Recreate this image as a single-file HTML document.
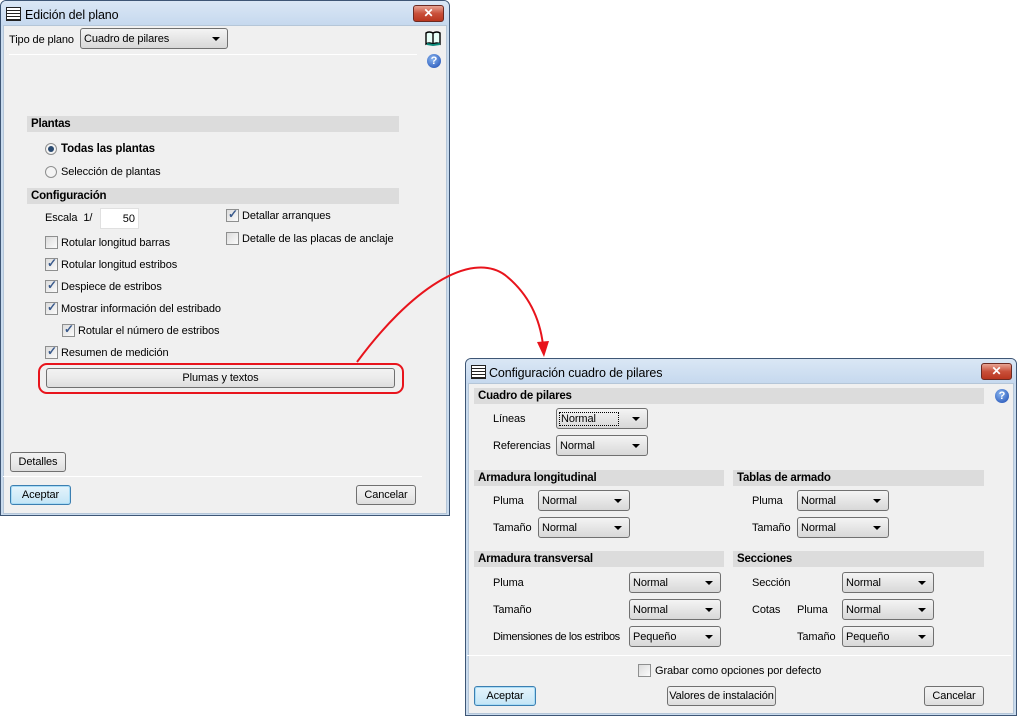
<!DOCTYPE html>
<html><head><meta charset="utf-8"><style>
*{box-sizing:border-box}
body{margin:0;width:1017px;height:716px;background:#fff;position:relative;overflow:hidden;font-family:"Liberation Sans",sans-serif;font-size:11px;color:#000}
.a{position:absolute;white-space:nowrap;margin-top:2px;letter-spacing:-0.1px}
.win{position:absolute;border:1px solid #3e5675;background:#c9dbee;border-radius:6px 6px 0 0}
.tb{position:absolute;left:0;right:0;top:0;height:25px;background:linear-gradient(#dae7f5,#c5d8ee);border-radius:5px 5px 0 0}
.body{position:absolute;background:#f0f0f0;border:1px solid #b5c6d8}
.ttl{font-size:12.5px;color:#000}
.close{position:absolute;width:31px;height:17px;border:1px solid #6b2a22;border-radius:3px;background:linear-gradient(#e8a493,#c9503a 50%,#b9361f);}
.close:after{content:"✕";position:absolute;left:0;right:0;top:0;text-align:center;color:#fff;font-weight:bold;font-size:12px;line-height:15px}
.hdr{position:absolute;height:16px;background:#dcdcdc;font-weight:bold;padding-left:4px;line-height:17px;font-size:11.5px;letter-spacing:-0.2px}
.sel{position:absolute;height:21px;border:1px solid #707070;border-radius:3px;background:linear-gradient(#f4f4f4,#e6e6e6 50%,#d8d8d8);padding-left:3px;line-height:20px;white-space:nowrap;letter-spacing:-0.1px}
.sel:after{content:"";position:absolute;right:7px;top:8px;border-left:4px solid transparent;border-right:4px solid transparent;border-top:4px solid #000}
.btn{position:absolute;height:20px;border:1px solid #707070;border-radius:3px;background:linear-gradient(#f2f2f2,#ebebeb 50%,#dddddd);text-align:center;line-height:19px;white-space:nowrap;letter-spacing:-0.1px}
.btn.def{border-color:#3c7fb1;box-shadow:inset 0 0 0 1px #a8dcf6;background:linear-gradient(#e5f4fc,#c4e5f6)}
.cb{position:absolute;width:13px;height:13px;border:1px solid #8e8f8f;background:linear-gradient(135deg,#dcdcdc,#fbfbfb)}
.cb.on:after{content:"✓";position:absolute;left:1px;top:-3px;font-size:12px;color:#3a5a8c;font-weight:bold}
.rd{position:absolute;width:12px;height:12px;border:1px solid #8e8f8f;border-radius:50%;background:#f4f4f4}
.rd.on:after{content:"";position:absolute;left:2px;top:2px;width:6px;height:6px;border-radius:50%;background:#2a4a70}
.hl{position:absolute;height:1px;background:#a0a0a0;border-bottom:1px solid #fff}
.help{position:absolute;width:14px;height:14px;border-radius:50%;background:radial-gradient(circle at 40% 35%,#8ab6f0,#1848b0);color:#fff;font-weight:bold;font-size:11px;text-align:center;line-height:14px}
.ico{position:absolute;width:15px;height:14px;border:1px solid #222;background:repeating-linear-gradient(#fff 0 2px,#222 2px 3px)}
</style></head><body>

<!-- Window 1 -->
<div class="win" style="left:0;top:0;width:450px;height:516px">
 <div class="tb"></div>
 <div class="ico" style="left:5px;top:6px"></div>
 <div class="a ttl" style="left:24px;top:5px">Edición del plano</div>
 <div class="close" style="left:412px;top:4px"></div>
 <div class="body" style="left:2px;top:24px;width:444px;height:489px"></div>
</div>
<div class="a" style="left:9px;top:32px">Tipo de plano</div>
<div class="sel" style="left:80px;top:28px;width:148px">Cuadro de pilares</div>
<div class="hl" style="left:9px;top:54px;width:408px"></div>
<svg style="position:absolute;left:425px;top:31px" width="17" height="15" viewBox="0 0 17 15"><path d="M1 2 Q4 0 8 2 L8 13 Q4 11 1 13Z M8 2 Q12 0 15 2 L15 13 Q12 11 8 13Z" fill="#e8fff8" stroke="#000" stroke-width="1.4"/><path d="M2 13 L8 14 L15 13" stroke="#0a8a7a" stroke-width="2" fill="none"/></svg>
<div class="help" style="left:427px;top:54px">?</div>

<div class="hdr" style="left:27px;top:116px;width:372px">Plantas</div>
<div class="rd on" style="left:45px;top:143px"></div>
<div class="a" style="left:61px;top:141px;font-weight:bold;font-size:11.5px">Todas las plantas</div>
<div class="rd" style="left:45px;top:166px"></div>
<div class="a" style="left:61px;top:164px">Selección de plantas</div>

<div class="hdr" style="left:27px;top:188px;width:372px">Configuración</div>
<div class="a" style="left:45px;top:210px">Escala&nbsp;&nbsp;1/</div>
<div style="position:absolute;left:100px;top:208px;width:39px;height:21px;background:#fff;border:1px solid #e0e0e0;text-align:right;padding-right:3px;line-height:20px">50</div>
<div class="cb" style="left:45px;top:236px"></div><div class="a" style="left:61px;top:235px">Rotular longitud barras</div>
<div class="cb on" style="left:45px;top:258px"></div><div class="a" style="left:61px;top:257px">Rotular longitud estribos</div>
<div class="cb on" style="left:45px;top:280px"></div><div class="a" style="left:61px;top:279px">Despiece de estribos</div>
<div class="cb on" style="left:45px;top:302px"></div><div class="a" style="left:61px;top:301px">Mostrar información del estribado</div>
<div class="cb on" style="left:62px;top:324px"></div><div class="a" style="left:78px;top:323px">Rotular el número de estribos</div>
<div class="cb on" style="left:45px;top:346px"></div><div class="a" style="left:61px;top:345px">Resumen de medición</div>
<div class="cb on" style="left:226px;top:209px"></div><div class="a" style="left:242px;top:208px">Detallar arranques</div>
<div class="cb" style="left:226px;top:232px"></div><div class="a" style="left:242px;top:231px">Detalle de las placas de anclaje</div>
<div class="btn" style="left:46px;top:368px;width:349px">Plumas y textos</div>
<div style="position:absolute;left:38px;top:363px;width:366px;height:31px;border:2px solid #e8141c;border-radius:9px"></div>
<div class="btn" style="left:10px;top:452px;width:56px">Detalles</div>
<div class="hl" style="left:3px;top:476px;width:419px"></div>
<div class="btn def" style="left:10px;top:485px;width:61px">Aceptar</div>
<div class="btn" style="left:356px;top:485px;width:60px">Cancelar</div>

<!-- arrow -->
<svg style="position:absolute;left:0;top:0" width="1017" height="716"><path d="M357 362 C 410 290, 470 250, 505 275 C 530 295, 540 320, 543 345" fill="none" stroke="#e8141c" stroke-width="2"/><path d="M537 342 L544 357 L549 341Z" fill="#e8141c"/></svg>

<!-- Window 2 -->
<div class="win" style="left:465px;top:358px;width:552px;height:358px">
 <div class="tb"></div>
 <div class="ico" style="left:5px;top:6px"></div>
 <div class="a ttl" style="left:23px;top:5px">Configuración cuadro de pilares</div>
 <div class="close" style="left:515px;top:4px"></div>
 <div class="body" style="left:2px;top:24px;width:546px;height:331px"></div>
</div>
<div class="hdr" style="left:474px;top:388px;width:510px">Cuadro de pilares</div>
<div class="help" style="left:995px;top:389px">?</div>
<div class="a" style="left:493px;top:411px">Líneas</div>
<div class="sel" style="left:556px;top:408px;width:92px"><span style="border:1px dotted #000;padding:0 4px 0 1px;margin-left:-1px">Normal&nbsp;&nbsp;&nbsp;&nbsp;&nbsp;&nbsp;</span></div>
<div class="a" style="left:493px;top:438px">Referencias</div>
<div class="sel" style="left:556px;top:435px;width:92px">Normal</div>

<div class="hdr" style="left:474px;top:470px;width:250px">Armadura longitudinal</div>
<div class="hdr" style="left:733px;top:470px;width:251px">Tablas de armado</div>
<div class="a" style="left:493px;top:493px">Pluma</div><div class="sel" style="left:538px;top:490px;width:92px">Normal</div>
<div class="a" style="left:493px;top:520px">Tamaño</div><div class="sel" style="left:538px;top:517px;width:92px">Normal</div>
<div class="a" style="left:752px;top:493px">Pluma</div><div class="sel" style="left:797px;top:490px;width:92px">Normal</div>
<div class="a" style="left:752px;top:520px">Tamaño</div><div class="sel" style="left:797px;top:517px;width:92px">Normal</div>

<div class="hdr" style="left:474px;top:551px;width:250px">Armadura transversal</div>
<div class="hdr" style="left:733px;top:551px;width:251px">Secciones</div>
<div class="a" style="left:493px;top:575px">Pluma</div><div class="sel" style="left:629px;top:572px;width:92px">Normal</div>
<div class="a" style="left:493px;top:602px">Tamaño</div><div class="sel" style="left:629px;top:599px;width:92px">Normal</div>
<div class="a" style="left:493px;top:629px;letter-spacing:-0.4px">Dimensiones de los estribos</div><div class="sel" style="left:629px;top:626px;width:92px">Pequeño</div>
<div class="a" style="left:752px;top:575px">Sección</div><div class="sel" style="left:842px;top:572px;width:92px">Normal</div>
<div class="a" style="left:752px;top:602px">Cotas</div><div class="a" style="left:797px;top:602px">Pluma</div><div class="sel" style="left:842px;top:599px;width:92px">Normal</div>
<div class="a" style="left:797px;top:629px">Tamaño</div><div class="sel" style="left:842px;top:626px;width:92px">Pequeño</div>
<div class="hl" style="left:467px;top:655px;width:544px"></div>
<div class="cb" style="left:638px;top:664px"></div><div class="a" style="left:655px;top:663px">Grabar como opciones por defecto</div>
<div class="btn def" style="left:474px;top:686px;width:62px">Aceptar</div>
<div class="btn" style="left:667px;top:686px;width:109px">Valores de instalación</div>
<div class="btn" style="left:924px;top:686px;width:60px">Cancelar</div>
</body></html>
